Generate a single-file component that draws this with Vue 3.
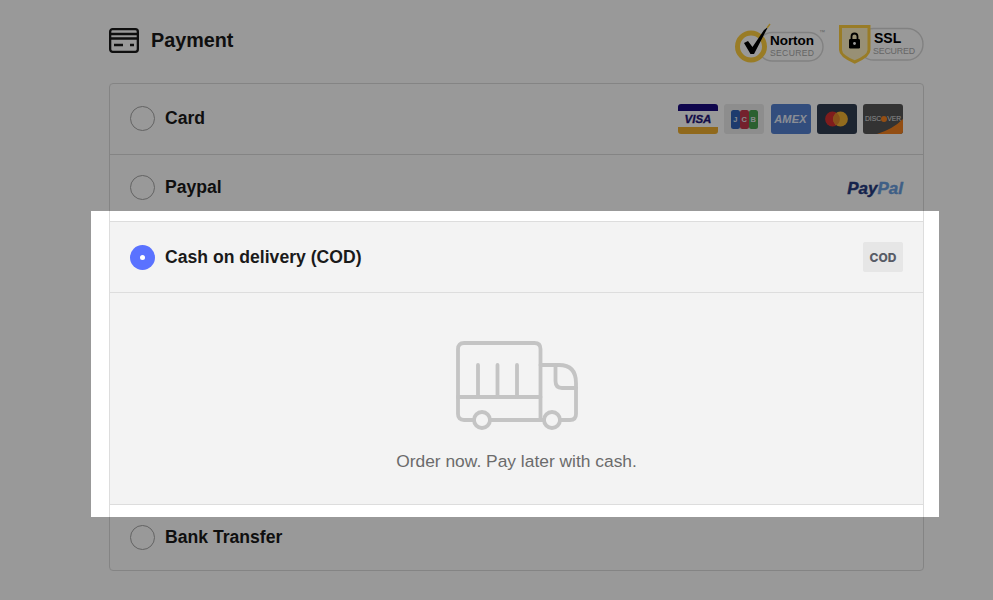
<script setup>
const cards = ['visa', 'jcb', 'amex', 'mc', 'discover']
</script>

<template>
  <div class="page">
    <header class="head">
      <div class="title">
        <svg class="title-icon" width="30" height="25" viewBox="0 0 30 25" fill="none" stroke="#1a1a1a" stroke-width="2.3">
          <rect x="1.15" y="1.15" width="27.7" height="22.7" rx="2.5" />
          <path d="M1.2 6H28.8M1.2 10.5H28.8" />
          <path d="M5 17H14M21 17H25" />
        </svg>
        <h2>Payment</h2>
      </div>
      <div class="badges">
        <div class="norton">
          <svg width="90" height="40" viewBox="0 0 90 40" fill="none">
            <rect x="24" y="8.5" width="65" height="28.5" rx="14.25" stroke="#d8d8d8" stroke-width="1.4" />
            <circle cx="17" cy="22.5" r="13.5" fill="#fff" stroke="#ffcf40" stroke-width="5" />
            <path d="M10 19L14 17L18.5 23L30 6L34 3L20 30H16.5Z" fill="#000" />
            <path d="M33 4L36 0" stroke="#ffcf40" stroke-width="1.4" />
            <text x="36" y="21" class="n1" textLength="44">Norton</text>
            <text x="36" y="31.5" class="n2" textLength="44">SECURED</text>
            <text x="85" y="10" class="tm">™</text>
          </svg>
        </div>
        <div class="ssl">
          <svg width="86" height="40" viewBox="0 0 86 40" fill="none">
            <rect x="20" y="4.5" width="65" height="31.5" rx="15.75" stroke="#d8d8d8" stroke-width="1.4" />
            <path d="M2.5 2.5H31V26Q31 32 16.75 38Q2.5 32 2.5 26Z" fill="#fdf0c3" stroke="#ffcf40" stroke-width="3" />
            <rect x="11" y="15" width="11" height="9.5" rx="1.2" fill="#000" />
            <path d="M13.5 15V12.5A3 3 0 0 1 19.5 12.5V15" stroke="#000" stroke-width="1.8" />
            <circle cx="16.5" cy="19.5" r="1.4" fill="#fff" />
            <text x="36" y="19" class="s1">SSL</text>
            <text x="35" y="30" class="s2" textLength="42">SECURED</text>
          </svg>
        </div>
      </div>
    </header>

    <section class="box">
      <div class="row row-card lift">
        <span class="radio"></span>
        <span class="label">Card</span>
        <div class="cards">
          <span v-for="c in cards" :key="c" class="pay" :class="c">
            <template v-if="c === 'visa'"><i class="visa-text">VISA</i></template>
            <template v-else-if="c === 'jcb'">
              <b class="j1">J</b><b class="j2">C</b><b class="j3">B</b>
            </template>
            <template v-else-if="c === 'amex'"><i class="amex-text">AMEX</i></template>
            <template v-else-if="c === 'mc'">
              <svg width="40" height="30" viewBox="0 0 40 30">
                <circle cx="15.5" cy="15" r="7.4" fill="#d63030" />
                <circle cx="23.5" cy="15" r="7.4" fill="#f2b233" />
                <path d="M19.5 8.8a7.4 7.4 0 0 1 0 12.4a7.4 7.4 0 0 1 0-12.4Z" fill="#e0852c" />
              </svg>
            </template>
            <template v-else>
              <svg class="disc-corner" width="40" height="30" viewBox="0 0 40 30">
                <path d="M40 15V30H14Q30 25 40 15Z" fill="#f58220" />
              </svg>
              <span class="disc-text">DISC<em></em>VER</span>
            </template>
          </span>
        </div>
      </div>

      <div class="row row-paypal lift">
        <span class="radio"></span>
        <span class="label">Paypal</span>
        <span class="paypal"><b>Pay</b><b class="pal">Pal</b></span>
      </div>

      <div class="row row-cod active">
        <span class="radio on"></span>
        <span class="label">Cash on delivery (COD)</span>
        <span class="cod">COD</span>
      </div>

      <div class="cod-panel">
        <svg class="truck" width="122" height="92" viewBox="0 0 122 92" fill="none" stroke="#c4c4c4" stroke-width="3.8" stroke-linecap="round" stroke-linejoin="round">
          <path d="M18 79H8Q2 79 2 73V8Q2 2 8 2H78.5Q84.5 2 84.5 8V79H34" />
          <path d="M2 56H84.5" />
          <path d="M22 24V56M41.5 24V56M61 24V56" />
          <path d="M84.5 24H103Q120 24 120 42V73Q120 79 114 79H104" />
          <path d="M99.5 24V40Q99.5 47 106 47H120" />
          <path d="M84.5 79H88" />
          <circle cx="26" cy="79" r="8" />
          <circle cx="96" cy="79" r="8" />
        </svg>
        <p>Order now. Pay later with cash.</p>
      </div>

      <div class="row row-bank">
        <span class="radio"></span>
        <span class="label">Bank Transfer</span>
      </div>
    </section>

    <div class="spotlight"></div>
  </div>
</template>

<style scoped>
.page {
  position: relative;
  width: 993px;
  height: 600px;
  overflow: hidden;
  background: #fff;
  padding-left: 109px;
  box-sizing: border-box;
  font-family: "Liberation Sans", Arial, sans-serif;
  color: #1a1a1a;
}
.head {
  width: 815px;
  height: 83px;
  display: flex;
  justify-content: space-between;
  align-items: flex-start;
}
.title {
  display: flex;
  align-items: center;
  gap: 12px;
  padding-top: 27px;
}
.title-icon { display: block; }
h2 {
  margin: 0;
  font-size: 19.8px;
  line-height: 26px;
  font-weight: 700;
}
.badges {
  display: flex;
  gap: 14px;
  padding-top: 24px;
}
.badges svg { display: block; overflow: visible; }
.n1 { font: 700 13.5px "Liberation Sans", sans-serif; fill: #000; }
.n2 { font: 400 8.6px "Liberation Sans", sans-serif; fill: #a8a8a8; }
.tm { font: 400 6px "Liberation Sans", sans-serif; fill: #a8a8a8; }
.s1 { font: 700 14px "Liberation Sans", sans-serif; fill: #000; }
.s2 { font: 400 8.8px "Liberation Sans", sans-serif; fill: #aaa; }
.box {
  width: 815px;
  height: 488px;
  box-sizing: border-box;
  border: 1px solid #ddd;
  border-radius: 4px;
  overflow: hidden;
}
.row {
  display: flex;
  align-items: center;
  padding: 0 20px;
  box-sizing: border-box;
  border-bottom: 1px solid #ddd;
}
.row-card { height: 71px; }
.row-paypal { height: 67px; }
.row-cod { height: 71px; }
.row-bank { height: 65px; border-bottom: 0; }
.lift .radio, .lift .label { margin-bottom: 2px; }
.active { background: #f3f3f3; }
.radio {
  width: 25px;
  height: 25px;
  box-sizing: border-box;
  border: 1px solid #a5a5a5;
  border-radius: 50%;
  flex: none;
}
.radio.on {
  background: #5a72ff;
  border: 0;
  display: flex;
  align-items: center;
  justify-content: center;
}
.radio.on::after {
  content: "";
  width: 5px;
  height: 5px;
  border-radius: 50%;
  background: #fff;
}
.label {
  margin-left: 10px;
  font-size: 17.6px;
  font-weight: 700;
  flex: 1;
}
.cards { display: flex; gap: 6.25px; }
.pay {
  position: relative;
  width: 40px;
  height: 30px;
  border-radius: 3px;
  overflow: hidden;
  display: flex;
  align-items: center;
  justify-content: center;
}
.visa {
  background: linear-gradient(#1a0a80 0 7px, #fff 7px 23px, #f0b030 23px);
}
.visa-text {
  font: italic 700 11.5px "Liberation Sans", sans-serif;
  color: #1d1478;
  -webkit-text-stroke: 0.3px #1d1478;
}
.jcb { background: #ebebeb; }
.jcb b {
  width: 8.5px;
  height: 19px;
  border-radius: 2.5px;
  color: #dfe3ea;
  font: 700 7.5px/19px "Liberation Sans", sans-serif;
  text-align: center;
}
.j1 { background: #3163b8; }
.j2 { background: #c2384c; margin: 0 0.5px; }
.j3 { background: #48a050; }
.amex { background: #5480d0; }
.amex-text {
  font: italic 700 11px "Liberation Sans", sans-serif;
  color: #e6ecf8;
  letter-spacing: 0.2px;
}
.mc { background: #2f3c50; }
.mc svg, .disc-corner { display: block; }
.discover { background: #555; }
.disc-corner { position: absolute; left: 0; top: 0; }
.disc-text {
  position: relative;
  font: 400 6.8px "Liberation Sans", sans-serif;
  color: #e4e4e4;
  display: flex;
  align-items: center;
  margin-bottom: 1px;
}
.disc-text em {
  width: 6px;
  height: 6px;
  border-radius: 50%;
  background: #f58220;
}
.paypal {
  font: italic 700 17px "Liberation Sans", sans-serif;
  color: #253b80;
  -webkit-text-stroke: 0.4px currentColor;
  margin-top: 2px;
}
.pal { color: #6a9fe0; }
.cod {
  width: 40px;
  height: 30px;
  background: #e6e6e6;
  border-radius: 2px;
  display: flex;
  align-items: center;
  justify-content: center;
  font: 800 12px Inter, "Liberation Sans", sans-serif;
  color: #585c66;
}
.cod-panel {
  height: 212px;
  box-sizing: border-box;
  background: #f3f3f3;
  border-bottom: 1px solid #ddd;
  display: flex;
  flex-direction: column;
  align-items: center;
  padding-top: 48px;
}
.truck { display: block; }
.cod-panel p {
  margin: 16px 0 0;
  font-size: 17.4px;
  line-height: 24px;
  color: #6b6b6b;
}
.spotlight {
  position: absolute;
  left: 91px;
  top: 211px;
  width: 848px;
  height: 306px;
  box-shadow: 0 0 0 1200px rgba(0, 0, 0, 0.4);
  pointer-events: none;
}
</style>

<style>
html, body { margin: 0; }
</style>
